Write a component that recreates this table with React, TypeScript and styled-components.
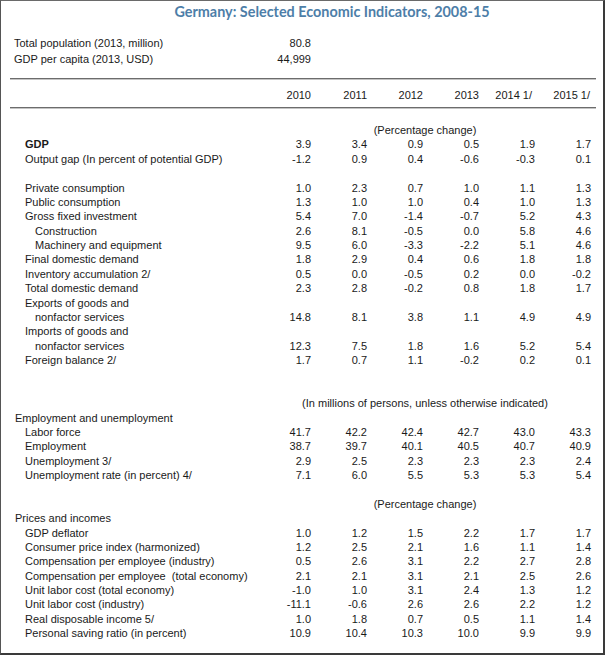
import React from "react";
import styled, { createGlobalStyle } from "styled-components";

const GlobalStyle = createGlobalStyle`
  html, body { margin: 0; padding: 0; background: #ffffff; }
  body { font-family: "Liberation Sans", Arial, sans-serif; }
`;

const COLS = "254px repeat(6, 56px)";
const ROW_H = 14.38;

const Frame = styled.div`
  box-sizing: border-box;
  width: 605px;
  height: 655px;
  border-top: 1px solid #6a6a6a;
  border-left: 1px solid #555555;
  border-right: 2px solid #3a3a3a;
  border-bottom: 2px solid #3a3a3a;
  background: #ffffff;
  color: #1a1a1a;
  font-size: 11px;
  display: flex;
  flex-direction: column;
`;

const Title = styled.h1`
  margin: 0;
  padding: 1px 0 0 60px;
  text-align: center;
  font-family: Lato, "Open Sans", sans-serif;
  font-weight: 700;
  font-size: 14.4px;
  line-height: 20px;
  color: #4d7ea8;
`;

const InfoBlock = styled.div`
  margin-top: 13px;
  display: flex;
  flex-direction: column;
`;

const InfoRow = styled.div`
  display: grid;
  grid-template-columns: ${COLS};
  height: 16px;
  line-height: 16px;
`;

const Rule = styled.div<{ $top: number }>`
  margin: ${(p) => p.$top}px 7px 0 9px;
  height: 1px;
  background: #6c6c6c;
  box-shadow: 0 1px 0 #c4c4c4;
`;

const HeaderRow = styled.div`
  margin-top: 9px;
  display: grid;
  grid-template-columns: ${COLS};
  height: 14px;
  line-height: 14px;
`;

const Body = styled.div`
  margin-top: 15px;
  display: flex;
  flex-direction: column;
`;

const Row = styled.div`
  display: grid;
  grid-template-columns: ${COLS};
  height: ${ROW_H}px;
  line-height: ${ROW_H}px;
  white-space: pre;
`;

const Label = styled.div<{ $indent: number; $bold?: boolean }>`
  padding-left: ${(p) => p.$indent}px;
  font-weight: ${(p) => (p.$bold ? 700 : 400)};
`;

const Cell = styled.div<{ $shift?: number }>`
  text-align: right;
  padding-right: ${(p) => p.$shift ?? 0}px;
`;

const Note = styled.div`
  grid-column: 2 / -1;
  text-align: center;
  padding-left: 4px;
`;

type Line =
  | { kind: "blank" }
  | { kind: "note"; text: string }
  | { kind: "section"; text: string }
  | { kind: "data"; label: string; level: 1 | 2; bold?: boolean; values?: string[] };

const lines: Line[] = [
  { kind: "note", text: "(Percentage change)" },
  { kind: "data", label: "GDP", level: 1, bold: true, values: ["3.9", "3.4", "0.9", "0.5", "1.9", "1.7"] },
  { kind: "data", label: "Output gap (In percent of potential GDP)", level: 1, values: ["-1.2", "0.9", "0.4", "-0.6", "-0.3", "0.1"] },
  { kind: "blank" },
  { kind: "data", label: "Private consumption", level: 1, values: ["1.0", "2.3", "0.7", "1.0", "1.1", "1.3"] },
  { kind: "data", label: "Public consumption", level: 1, values: ["1.3", "1.0", "1.0", "0.4", "1.0", "1.3"] },
  { kind: "data", label: "Gross fixed investment", level: 1, values: ["5.4", "7.0", "-1.4", "-0.7", "5.2", "4.3"] },
  { kind: "data", label: "Construction", level: 2, values: ["2.6", "8.1", "-0.5", "0.0", "5.8", "4.6"] },
  { kind: "data", label: "Machinery and equipment", level: 2, values: ["9.5", "6.0", "-3.3", "-2.2", "5.1", "4.6"] },
  { kind: "data", label: "Final domestic demand", level: 1, values: ["1.8", "2.9", "0.4", "0.6", "1.8", "1.8"] },
  { kind: "data", label: "Inventory accumulation 2/", level: 1, values: ["0.5", "0.0", "-0.5", "0.2", "0.0", "-0.2"] },
  { kind: "data", label: "Total domestic demand", level: 1, values: ["2.3", "2.8", "-0.2", "0.8", "1.8", "1.7"] },
  { kind: "data", label: "Exports of goods and", level: 1 },
  { kind: "data", label: "nonfactor services", level: 2, values: ["14.8", "8.1", "3.8", "1.1", "4.9", "4.9"] },
  { kind: "data", label: "Imports of goods and", level: 1 },
  { kind: "data", label: "nonfactor services", level: 2, values: ["12.3", "7.5", "1.8", "1.6", "5.2", "5.4"] },
  { kind: "data", label: "Foreign balance 2/", level: 1, values: ["1.7", "0.7", "1.1", "-0.2", "0.2", "0.1"] },
  { kind: "blank" },
  { kind: "blank" },
  { kind: "note", text: "(In millions of persons, unless otherwise indicated)" },
  { kind: "section", text: "Employment and unemployment" },
  { kind: "data", label: "Labor force", level: 1, values: ["41.7", "42.2", "42.4", "42.7", "43.0", "43.3"] },
  { kind: "data", label: "Employment", level: 1, values: ["38.7", "39.7", "40.1", "40.5", "40.7", "40.9"] },
  { kind: "data", label: "Unemployment 3/", level: 1, values: ["2.9", "2.5", "2.3", "2.3", "2.3", "2.4"] },
  { kind: "data", label: "Unemployment rate (in percent) 4/", level: 1, values: ["7.1", "6.0", "5.5", "5.3", "5.3", "5.4"] },
  { kind: "blank" },
  { kind: "note", text: "(Percentage change)" },
  { kind: "section", text: "Prices and incomes" },
  { kind: "data", label: "GDP deflator", level: 1, values: ["1.0", "1.2", "1.5", "2.2", "1.7", "1.7"] },
  { kind: "data", label: "Consumer price index (harmonized)", level: 1, values: ["1.2", "2.5", "2.1", "1.6", "1.1", "1.4"] },
  { kind: "data", label: "Compensation per employee (industry)", level: 1, values: ["0.5", "2.6", "3.1", "2.2", "2.7", "2.8"] },
  { kind: "data", label: "Compensation per employee  (total economy)", level: 1, values: ["2.1", "2.1", "3.1", "2.1", "2.5", "2.6"] },
  { kind: "data", label: "Unit labor cost (total economy)", level: 1, values: ["-1.0", "1.0", "3.1", "2.4", "1.3", "1.2"] },
  { kind: "data", label: "Unit labor cost (industry)", level: 1, values: ["-11.1", "-0.6", "2.6", "2.6", "2.2", "1.2"] },
  { kind: "data", label: "Real disposable income 5/", level: 1, values: ["1.0", "1.8", "0.7", "0.5", "1.1", "1.4"] },
  { kind: "data", label: "Personal saving ratio (in percent)", level: 1, values: ["10.9", "10.4", "10.3", "10.0", "9.9", "9.9"] },
];

const years = ["2010", "2011", "2012", "2013", "2014 1/", "2015 1/"];
const yearShift = [0, 0, 0, 0, 3, 1];

function renderLine(line: Line, i: number) {
  switch (line.kind) {
    case "blank":
      return <Row key={i} />;
    case "note":
      return (
        <Row key={i}>
          <Note>{line.text}</Note>
        </Row>
      );
    case "section":
      return (
        <Row key={i}>
          <Label $indent={14}>{line.text}</Label>
        </Row>
      );
    case "data":
      return (
        <Row key={i}>
          <Label $indent={line.level === 1 ? 24 : 34} $bold={line.bold}>
            {line.label}
          </Label>
          {(line.values ?? []).map((v, j) => (
            <Cell key={j}>{v}</Cell>
          ))}
        </Row>
      );
  }
}

export default function App() {
  return (
    <>
      <GlobalStyle />
      <Frame>
        <Title>Germany: Selected Economic Indicators, 2008-15</Title>
        <InfoBlock>
          <InfoRow>
            <Label $indent={13}>Total population (2013, million)</Label>
            <Cell>80.8</Cell>
          </InfoRow>
          <InfoRow>
            <Label $indent={13}>GDP per capita (2013, USD)</Label>
            <Cell>44,999</Cell>
          </InfoRow>
        </InfoBlock>
        <Rule $top={11} />
        <HeaderRow>
          <div />
          {years.map((y, j) => (
            <Cell key={y} $shift={yearShift[j]}>
              {y}
            </Cell>
          ))}
        </HeaderRow>
        <Rule $top={5} />
        <Body>{lines.map(renderLine)}</Body>
      </Frame>
    </>
  );
}
